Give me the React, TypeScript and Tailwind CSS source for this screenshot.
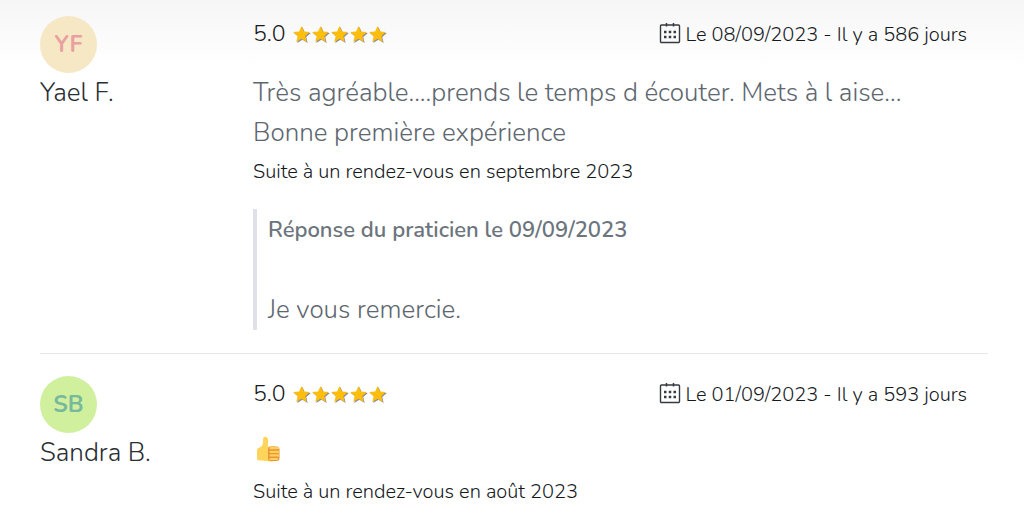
import React from 'react';

interface Review {
  initials: string;
  name: string;
  avatarClass: string;
  rating: string;
  date: string;
  comment?: string[];
  visit: string;
  answer?: { title: string; text: string };
}

const reviews: Review[] = [
  {
    initials: 'YF',
    name: 'Yael F.',
    avatarClass: 'bg-[#f7e8c5] text-[#e8a0a0]',
    rating: '5.0',
    date: 'Le 08/09/2023 - Il y a 586 jours',
    comment: [
      'Très agréable....prends le temps d écouter. Mets à l aise...',
      'Bonne première expérience',
    ],
    visit: 'Suite à un rendez-vous en septembre 2023',
    answer: {
      title: 'Réponse du praticien le 09/09/2023',
      text: 'Je vous remercie.',
    },
  },
  {
    initials: 'SB',
    name: 'Sandra B.',
    avatarClass: 'bg-[#d0f09e] text-[#78b89c]',
    rating: '5.0',
    date: 'Le 01/09/2023 - Il y a 593 jours',
    visit: 'Suite à un rendez-vous en août 2023',
  },
];

const starPath = 'M10 1l2.5 5.9 6.4.5-4.9 4.2 1.5 6.3L10 14.5l-5.5 3.4L6 11.6 1.1 7.4l6.4-.5z';

const Star: React.FC = () => (
  <svg viewBox="0 0 20 20" className="size-[19px]" aria-hidden="true">
    <path d={starPath} fill="#8e8e9c" transform="translate(1 1)" />
    <path d={starPath} fill="#ffbe0b" />
  </svg>
);

const CalendarIcon: React.FC = () => (
  <svg viewBox="0 0 22 22" className="mb-1 size-[22px] shrink-0" fill="none" stroke="#343a40" aria-hidden="true">
    <rect x="1.5" y="3" width="19" height="17.5" rx="1" strokeWidth="1.4" />
    <path d="M7.5 1v3.5M14.5 1v3.5" strokeWidth="1.5" />
    <path d="M5 10h2.5M9.75 10h2.5M14.5 10H17M5 15h2.5M9.75 15h2.5M14.5 15H17" strokeWidth="2.3" />
  </svg>
);

const ThumbUp: React.FC = () => (
  <svg viewBox="0 0 28 28" className="size-7" role="img" aria-label="Pouce levé">
    <path
      d="M4 14.5C4.5 13 8.5 12.500 9.800 9L10.200 3.500C10.500 1.200 14 1.200 14.800 3.500C15.800 6.300 15 9 14.800 11.500H23V25.500C19 27 13 26.500 10.500 25.500H6C4.500 25.500 4 24.500 4 23Z"
      fill="#ffd45a"
    />
    <rect x="15" y="11.5" width="11.5" height="14.5" rx="3" fill="#e8953c" />
    <path d="M17.500 13.200h7.500M17.500 16.800h8M17.500 20.400h7.800M17.500 24h6.500" stroke="#ffd05a" strokeWidth="2.200" strokeLinecap="round" />
  </svg>
);

const ReviewItem: React.FC<Review> = (props) => {
  return (
    <article className="grid grid-cols-[213px_1fr] border-b border-[#e5e7e9] pb-[23px] last:border-none">
      <div>
        <div
          className={`flex size-[57px] items-center justify-center rounded-full pt-0.5 text-[23px] font-bold ${props.avatarClass}`}
        >
          {props.initials}
        </div>
        <p className="text-[26px] leading-10 text-[#292e33]">{props.name}</p>
      </div>
      <div>
        <div className="mb-[21px] flex h-9 items-center justify-between pr-[21px]">
          <div className="flex items-center">
            <span className="mr-1.5 text-[23px]">{props.rating}</span>
            {[1, 2, 3, 4, 5].map((star) => (
              <Star key={star} />
            ))}
          </div>
          <div className="flex items-center gap-1 pt-0.5 text-[20px]">
            <CalendarIcon />
            <span>{props.date}</span>
          </div>
        </div>
        {props.comment ? (
          <p className="text-[26px] leading-10 text-[#5e676f]">
            {props.comment.map((line) => (
              <span key={line} className="block">
                {line}
              </span>
            ))}
          </p>
        ) : (
          <div className="flex h-10 items-start pt-0.5">
            <ThumbUp />
          </div>
        )}
        <p className="text-[20px] leading-[38px]">{props.visit}</p>
        {props.answer && (
          <blockquote className="mt-[18px] border-l-4 border-[#dee2e6] pt-px pl-[11px] text-[#5e676f]">
            <p className="mb-10 text-[22px] leading-10 font-semibold text-[#6c757d]">{props.answer.title}</p>
            <p className="text-[26px] leading-10">{props.answer.text}</p>
          </blockquote>
        )}
      </div>
    </article>
  );
};

const App: React.FC = () => {
  return (
    <main className="bg-linear-to-b from-[#f6f6f6] to-white to-[68px] pt-4 pr-9 pl-10 font-['Nunito','Open_Sans',sans-serif] font-light text-[#15191c]">
      <div className="flex flex-col gap-[22px]">
        {reviews.map((review) => (
          <ReviewItem key={review.name} {...review} />
        ))}
      </div>
    </main>
  );
};

export default App;
